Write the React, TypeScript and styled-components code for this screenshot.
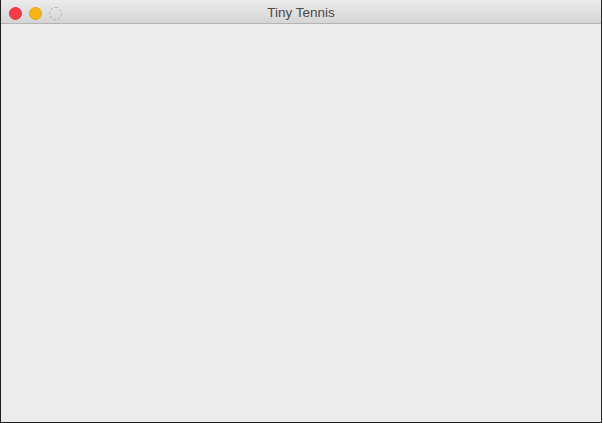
import React from "react";
import styled, { createGlobalStyle } from "styled-components";

const Global = createGlobalStyle`
  html, body { margin: 0; padding: 0; background: #ffffff; }
  body { width: 603px; height: 423px; overflow: hidden; }
`;

const Window = styled.div`
  box-sizing: border-box;
  width: 602px;
  height: 423px;
  display: flex;
  flex-direction: column;
  border-left: 1px solid #1e1e1e;
  border-right: 1px solid #2a2a2a;
  border-bottom: 1px solid #1e1e1e;
  background: #ececec;
`;

const TitleBar = styled.div`
  position: relative;
  height: 23px;
  flex: none;
  display: flex;
  align-items: center;
  justify-content: center;
  background: linear-gradient(#ebebeb, #d5d5d5);
  border-bottom: 1px solid #b4b4b4;
`;

const Lights = styled.div`
  position: absolute;
  left: 8px;
  top: 7px;
  display: flex;
  gap: 7px;
`;

const Light = styled.span<{ $color: string; $border: string; $dashed?: boolean }>`
  box-sizing: border-box;
  width: 13px;
  height: 13px;
  border-radius: 50%;
  background: ${(p) => p.$color};
  border: 1px ${(p) => (p.$dashed ? "dashed" : "solid")} ${(p) => p.$border};
`;

const Title = styled.div`
  font-family: "Helvetica Neue", "Liberation Sans", Arial, sans-serif;
  font-size: 13.5px;
  color: #4a4a4a;
  transform: translateY(1px);
`;

const Content = styled.div`
  flex: 1;
  background: #ececec;
`;

export default function App() {
  return (
    <>
      <Global />
      <Window>
        <TitleBar>
          <Lights>
            <Light $color="#f23d4b" $border="#e0343f" />
            <Light $color="#f6b61b" $border="#e0a517" />
            <Light $color="transparent" $border="#b0b0b0" $dashed />
          </Lights>
          <Title>Tiny Tennis</Title>
        </TitleBar>
        <Content />
      </Window>
    </>
  );
}
